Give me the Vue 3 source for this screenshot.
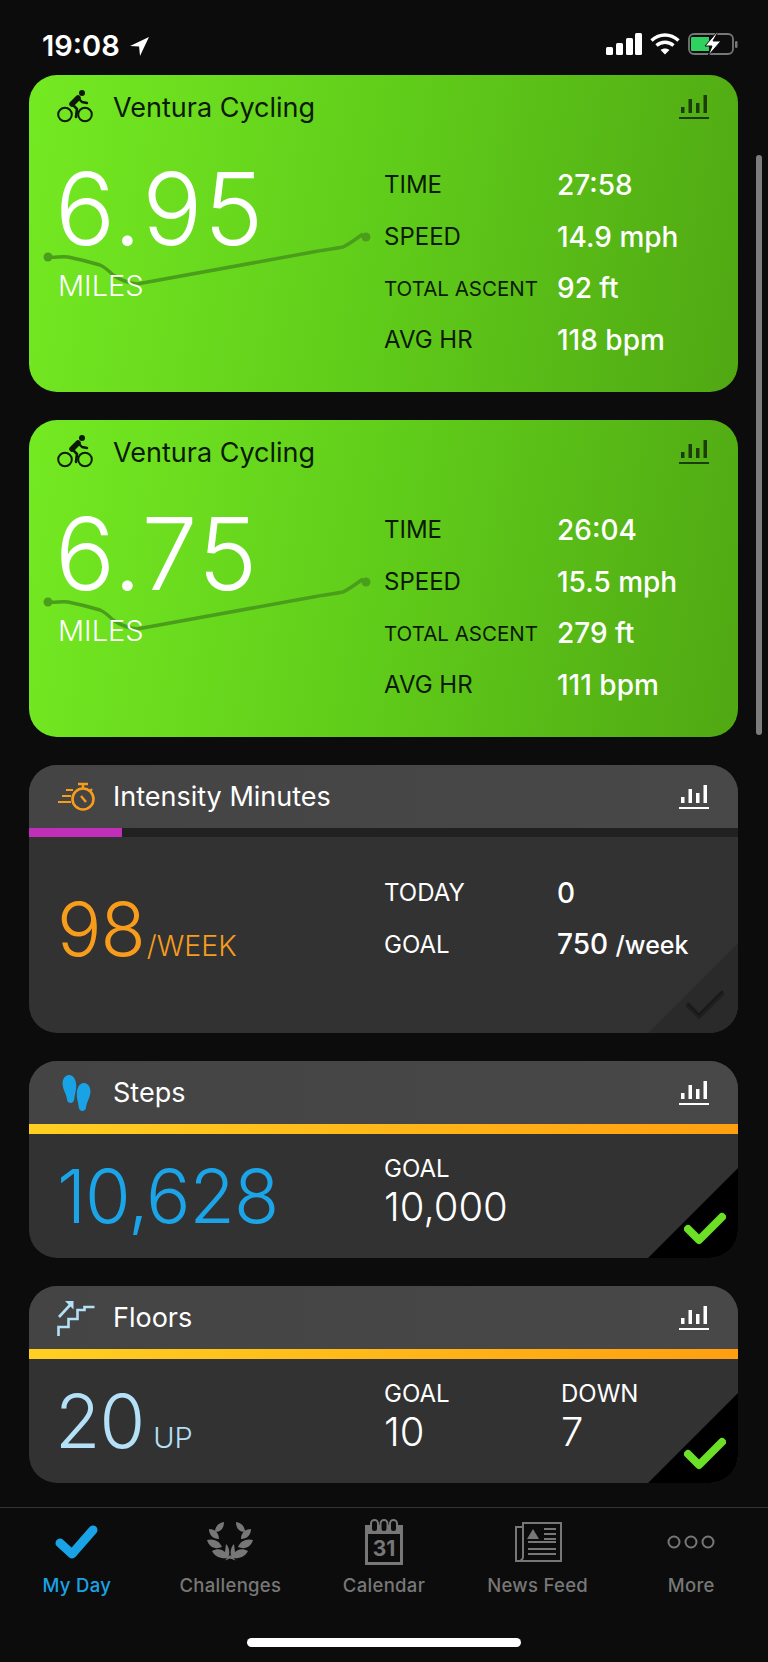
<script setup>
const rides = [
  { miles: '6.95', time: '27:58', speed: '14.9 mph', ascent: '92 ft', hr: '118 bpm' },
  { miles: '6.75', time: '26:04', speed: '15.5 mph', ascent: '279 ft', hr: '111 bpm' }
]
const laurel = 'M17 0C17 6 14 10 8 10 8 5 11 1 17 0zM2 7C8 7 12 11 12 17 6 17 2 13 2 7zM0 18C6 16 13 19 15 25 8 28 2 25 0 18zM5 29C10 26 15 27 18 30L19 22C23 26 23 32 21 36 14 37 8 35 5 29z'
</script>

<template>
  <div class="phone">
    <div class="status">
      <div class="clock">
        <span>19:08</span>
        <svg width="21" height="21" viewBox="0 0 20 20"><path d="M19 1 1 9.500l8.600.6.9 8.900z" fill="#fff" /></svg>
      </div>
      <div class="status-right">
        <svg width="36" height="22" viewBox="0 0 36 22" fill="#fff">
          <rect x="0" y="14" width="7" height="8" rx="1.500" />
          <rect x="10" y="10" width="7" height="12" rx="1.500" />
          <rect x="20" y="5" width="7" height="17" rx="1.500" />
          <rect x="29" y="0" width="7" height="22" rx="1.500" />
        </svg>
        <svg width="30" height="22" viewBox="0 0 30 22" fill="none" stroke="#fff" stroke-width="3.400">
          <path d="M1.500 7.500c8-7.400 19-7.400 27 0" />
          <path d="M6.500 12.500c5-4.400 12-4.400 17 0" />
          <path d="M15 21.500 10.600 17c2.600-2 6.200-2 8.800 0z" fill="#fff" stroke="none" />
        </svg>
        <svg width="50" height="24" viewBox="0 0 50 24">
          <rect x="1" y="2" width="44" height="20" rx="5" fill="none" stroke="#777" stroke-width="1.800" />
          <rect x="47" y="9" width="2.500" height="7" rx="1.200" fill="#777" />
          <path d="M4 5h17v14H4a1 1 0 0 1-1-1V6a1 1 0 0 1 1-1z" fill="#2fd15f" />
          <path d="M29 0 17 14h7l-4 10 13-15h-8l5-9z" fill="#fff" stroke="#0c0c0c" stroke-width="1" />
        </svg>
      </div>
    </div>

    <div class="list">
      <section v-for="ride in rides" :key="ride.miles" class="card green">
        <svg class="spark" width="345" height="70" viewBox="0 0 345 70" fill="none">
          <path d="M19 32c6 1 14-1 20 0 10 2 22 5 32 8 5 2 9 6 13 10 6 4 14 8 24 9l176-32c10-2 20-3 30-5 8-4 14-9 20-13" stroke="#4a9e1c" stroke-width="3.500" stroke-linejoin="round" />
          <circle cx="19" cy="32" r="4.500" fill="#4a9e1c" />
          <circle cx="337" cy="12" r="4.500" fill="#4a9e1c" />
        </svg>
        <header class="green-head">
          <svg class="head-icon" width="38" height="34" viewBox="0 0 38 34" fill="none" stroke="#0b1a05">
            <circle cx="8" cy="24.500" r="6.800" stroke-width="2" />
            <circle cx="28" cy="24.500" r="6.800" stroke-width="2" />
            <circle cx="25" cy="3" r="3" fill="#0b1a05" stroke="none" />
            <path d="M15 14l6-6" stroke-width="5.500" stroke-linecap="round" />
            <path d="M21 8l4 4 5 1" stroke-width="2.400" stroke-linecap="round" stroke-linejoin="round" />
            <path d="M15 14l5 5-1 8" stroke-width="2.600" stroke-linecap="round" stroke-linejoin="round" />
          </svg>
          <h2>Ventura Cycling</h2>
          <svg class="chart" width="30" height="26" viewBox="0 0 30 26" fill="#1b3d0c">
            <rect x="2" y="13" width="3.500" height="6" />
            <rect x="9.500" y="5" width="3.500" height="14" />
            <rect x="17" y="9" width="3.500" height="10" />
            <rect x="24.500" y="1" width="3.500" height="18" />
            <rect x="0" y="23" width="30" height="2" />
          </svg>
        </header>
        <div class="green-body">
          <div class="miles">
            <div class="miles-num">{{ ride.miles }}</div>
            <div class="miles-unit">MILES</div>
          </div>
          <dl class="stats">
            <dt>TIME</dt><dd>{{ ride.time }}</dd>
            <dt>SPEED</dt><dd>{{ ride.speed }}</dd>
            <dt class="small">TOTAL ASCENT</dt><dd>{{ ride.ascent }}</dd>
            <dt>AVG HR</dt><dd>{{ ride.hr }}</dd>
          </dl>
        </div>
      </section>

      <section class="card dark">
        <header class="dark-head">
          <svg class="head-icon" width="38" height="30" viewBox="0 0 38 30" fill="none" stroke="#f89c1c" stroke-width="2">
            <circle cx="26" cy="17" r="10.500" stroke-width="2.600" />
            <path d="M21 2h10M26 2v4M35 7l-2 2" stroke-width="2.400" />
            <path d="M24 14l5 6" stroke-width="2.400" />
            <path d="M9 8h7M5 14h9M1 20h13" />
          </svg>
          <h2>Intensity Minutes</h2>
          <svg class="chart" width="30" height="26" viewBox="0 0 30 26" fill="#fff">
            <rect x="2" y="13" width="3.500" height="6" />
            <rect x="9.500" y="5" width="3.500" height="14" />
            <rect x="17" y="9" width="3.500" height="10" />
            <rect x="24.500" y="1" width="3.500" height="18" />
            <rect x="0" y="23" width="30" height="2" />
          </svg>
        </header>
        <div class="track"><div class="fill-magenta"></div></div>
        <div class="dark-body intensity-body">
          <div class="main-val orange"><span class="num">98</span><span class="unit tight">/WEEK</span></div>
          <dl class="stats two">
            <dt>TODAY</dt><dd>0</dd>
            <dt>GOAL</dt><dd>750 <small>/week</small></dd>
          </dl>
          <div class="corner faint">
            <svg width="42" height="34" viewBox="0 0 42 34" fill="none">
              <path d="M3 17l12 12L39 5" stroke="#1f1f1f" stroke-width="5" />
              <path d="M3 16l12 12L39 4" stroke="#111" stroke-width="1" />
            </svg>
          </div>
        </div>
      </section>

      <section class="card dark">
        <header class="dark-head">
          <svg class="head-icon" width="38" height="38" viewBox="0 0 38 38" fill="#19a3e6">
            <path transform="translate(6 1) rotate(-5 7 14)" d="M7 0C11 0 13.500 4 13.500 10 13.500 16 11 20 10.500 24 10 27 8 28 6.500 28 4 28 3 26 3 23 3 19 0 14 0 9 0 4 3 0 7 0z" />
            <path transform="translate(33 9) scale(-1 1) rotate(-5 7 14)" d="M7 0C11 0 13.500 4 13.500 10 13.500 16 11 20 10.500 24 10 27 8 28 6.500 28 4 28 3 26 3 23 3 19 0 14 0 9 0 4 3 0 7 0z" />
          </svg>
          <h2>Steps</h2>
          <svg class="chart" width="30" height="26" viewBox="0 0 30 26" fill="#fff">
            <rect x="2" y="13" width="3.500" height="6" />
            <rect x="9.500" y="5" width="3.500" height="14" />
            <rect x="17" y="9" width="3.500" height="10" />
            <rect x="24.500" y="1" width="3.500" height="18" />
            <rect x="0" y="23" width="30" height="2" />
          </svg>
        </header>
        <div class="track gold"></div>
        <div class="dark-body goal-body">
          <div class="main-val blue"><span class="num">10,628</span></div>
          <div class="cols">
            <div class="col">
              <div class="col-label">GOAL</div>
              <div class="col-val">10,000</div>
            </div>
          </div>
          <div class="corner">
            <svg width="42" height="34" viewBox="0 0 42 34" fill="none">
              <path d="M4 17l11 11L38 5" stroke="#6ce026" stroke-width="8" stroke-linejoin="round" stroke-linecap="round" />
            </svg>
          </div>
        </div>
      </section>

      <section class="card dark">
        <header class="dark-head">
          <svg class="head-icon" width="38" height="38" viewBox="0 0 38 38" fill="none" stroke="#b4e0f8" stroke-width="2.600">
            <path d="M1.500 37V28h10v-8h9v-9h7V8h10" />
            <path d="M2 18 14 5" />
            <path d="M8 2h8.500v8.500z" fill="#b4e0f8" stroke="none" />
          </svg>
          <h2>Floors</h2>
          <svg class="chart" width="30" height="26" viewBox="0 0 30 26" fill="#fff">
            <rect x="2" y="13" width="3.500" height="6" />
            <rect x="9.500" y="5" width="3.500" height="14" />
            <rect x="17" y="9" width="3.500" height="10" />
            <rect x="24.500" y="1" width="3.500" height="18" />
            <rect x="0" y="23" width="30" height="2" />
          </svg>
        </header>
        <div class="track gold"></div>
        <div class="dark-body goal-body">
          <div class="main-val pale"><span class="num floors-num">20</span><span class="unit">UP</span></div>
          <div class="cols">
            <div class="col">
              <div class="col-label">GOAL</div>
              <div class="col-val">10</div>
            </div>
            <div class="col">
              <div class="col-label">DOWN</div>
              <div class="col-val">7</div>
            </div>
          </div>
          <div class="corner">
            <svg width="42" height="34" viewBox="0 0 42 34" fill="none">
              <path d="M4 17l11 11L38 5" stroke="#6ce026" stroke-width="8" stroke-linejoin="round" stroke-linecap="round" />
            </svg>
          </div>
        </div>
      </section>
    </div>

    <div class="scrollbar"></div>

    <nav class="tabs">
      <div class="tab active">
        <svg width="44" height="36" viewBox="0 0 44 36" fill="none">
          <path d="M5 19l12 11L38 6" stroke="#19a3e6" stroke-width="9" stroke-linejoin="round" stroke-linecap="round" />
        </svg>
        <span>My Day</span>
      </div>
      <div class="tab">
        <svg width="46" height="40" viewBox="0 0 46 40" fill="#777">
          <path d="M23 33l6 5.500-6-2-5 2z" />
          <path :d="laurel" />
          <path :d="laurel" transform="matrix(-1 0 0 1 46 0)" />
        </svg>
        <span>Challenges</span>
      </div>
      <div class="tab">
        <svg width="38" height="46" viewBox="0 0 38 46">
          <rect x="0" y="6" width="38" height="40" fill="#777" />
          <rect x="6" y="1" width="7" height="12" rx="3.500" fill="#0c0c0c" stroke="#777" stroke-width="2" />
          <rect x="15.500" y="1" width="7" height="12" rx="3.500" fill="#0c0c0c" stroke="#777" stroke-width="2" />
          <rect x="25" y="1" width="7" height="12" rx="3.500" fill="#0c0c0c" stroke="#777" stroke-width="2" />
          <rect x="3" y="15" width="32" height="28" fill="#0c0c0c" />
          <text x="19" y="37" text-anchor="middle" class="cal-num">31</text>
        </svg>
        <span>Calendar</span>
      </div>
      <div class="tab">
        <svg width="48" height="42" viewBox="0 0 48 42" fill="none" stroke="#777" stroke-width="2">
          <path d="M9 6H2v34h45V2H9z" />
          <path d="M9 6v30c0 2-2 4-4 4" />
          <path d="M14 21h28M14 28h28M14 33h28" />
          <path d="M30 8h12M30 13h12M30 18h12" />
          <path d="M13 18l6-10 6 10z" fill="#777" stroke="none" />
        </svg>
        <span>News Feed</span>
      </div>
      <div class="tab">
        <svg width="48" height="16" viewBox="0 0 48 16" fill="none" stroke="#777" stroke-width="2">
          <circle cx="7" cy="8" r="5.500" />
          <circle cx="24" cy="8" r="5.500" />
          <circle cx="41" cy="8" r="5.500" />
        </svg>
        <span>More</span>
      </div>
    </nav>
    <div class="home-bar"></div>
  </div>
</template>

<style scoped>
.phone {
  position: relative;
  width: 768px;
  height: 1662px;
  background: #0c0c0c;
  color: #fff;
  font-family: Inter, "Liberation Sans", sans-serif;
  overflow: hidden;
}
.status {
  height: 75px;
  display: flex;
  justify-content: space-between;
  align-items: flex-start;
  padding: 32px 30px 0 42px;
  box-sizing: border-box;
}
.clock {
  display: flex;
  align-items: center;
  gap: 9px;
  font-size: 29px;
  font-weight: 600;
  line-height: 28px;
}
.status-right {
  display: flex;
  align-items: center;
  gap: 8px;
}
.list {
  display: flex;
  flex-direction: column;
  gap: 28px;
  padding: 0 30px 0 29px;
}
.card {
  position: relative;
  border-radius: 28px;
  overflow: hidden;
}
.green {
  height: 317px;
  background: linear-gradient(100deg, #74ea22 0%, #60cc1a 50%, #50a813 100%);
}
.spark {
  position: absolute;
  left: 0;
  top: 150px;
}
.green-head,
.dark-head {
  display: flex;
  align-items: center;
  padding: 0 29px 0 28px;
}
.green-head {
  position: relative;
  height: 64px;
  color: #0b1a05;
}
.dark-head {
  height: 63px;
  background: linear-gradient(90deg, #444, #484848);
}
.head-icon {
  flex: none;
  width: 38px;
  margin-right: 18px;
}
h2 {
  flex: 1;
  margin: 0;
  font-size: 27px;
  font-weight: 400;
}
.green-body {
  position: relative;
  display: flex;
  padding: 14px 0 0 29px;
}
.green-body .stats {
  padding-top: 6px;
}
.miles {
  width: 326px;
}
.miles-num {
  margin-left: -3px;
  font-size: 100px;
  font-weight: 300;
  line-height: 112px;
  letter-spacing: 1.500px;
}
.miles-unit {
  margin-top: 4px;
  font-size: 29px;
  font-weight: 300;
  line-height: 34px;
}
.stats {
  display: grid;
  grid-template-columns: 173px auto;
  grid-auto-rows: 51.7px;
  align-items: center;
  margin: 0;
}
dt {
  font-size: 24px;
  font-weight: 400;
  color: #0b1a05;
}
dt.small {
  font-size: 20.500px;
}
dd {
  margin: 0;
  font-size: 28px;
  font-weight: 500;
  color: #fff;
}
dd small {
  font-size: 25px;
}
.dark {
  background: #323232;
}
.track {
  height: 9px;
  background: #212121;
}
.fill-magenta {
  width: 93px;
  height: 100%;
  background: #c12eb8;
}
.gold {
  height: 10px;
  background: linear-gradient(90deg, #ffd021, #ff9f10);
}
.dark-body {
  position: relative;
  display: flex;
  align-items: center;
  padding-left: 28px;
}
.intensity-body {
  height: 196px;
}
.goal-body {
  height: 124px;
}
.main-val {
  width: 327px;
  display: flex;
  align-items: baseline;
}
.intensity-body .main-val {
  margin-top: -12px;
}
.num {
  font-size: 74px;
  font-weight: 300;
  line-height: 84px;
  letter-spacing: -1px;
}
.floors-num {
  margin-left: -2px;
}
.unit {
  margin-left: 9px;
  font-size: 29px;
  font-weight: 300;
}
.unit.tight {
  margin-left: 2px;
  font-size: 28.500px;
}
.orange {
  color: #f89c1c;
}
.blue {
  color: #1ba5e8;
}
.pale {
  color: #b4e0f8;
}
dl.two {
  margin-top: -33px;
}
dl.two dt {
  color: #fff;
}
.cols {
  display: flex;
  margin-top: -8px;
}
.col {
  width: 177px;
}
.col-label {
  font-size: 24px;
  line-height: 30px;
}
.col-val {
  font-size: 40px;
  font-weight: 300;
  line-height: 46px;
}
.corner {
  position: absolute;
  right: 0;
  bottom: 0;
  width: 90px;
  height: 90px;
  background: #000;
  clip-path: polygon(100% 0, 100% 100%, 0 100%);
}
.corner.faint {
  background: #2a2a2a;
}
.corner svg {
  position: absolute;
  left: 36px;
  top: 44px;
}
.scrollbar {
  position: absolute;
  left: 756px;
  top: 155px;
  width: 6px;
  height: 580px;
  border-radius: 3px;
  background: #7c7c7c;
}
.tabs {
  position: absolute;
  left: 0;
  right: 0;
  top: 1507px;
  height: 155px;
  box-sizing: border-box;
  border-top: 1px solid #333;
  display: grid;
  grid-template-columns: repeat(5, 1fr);
}
.tab {
  position: relative;
  height: 92px;
  display: flex;
  flex-direction: column;
  align-items: center;
  color: #777;
}
.tab svg {
  position: absolute;
  left: 50%;
  top: 34px;
  transform: translate(-50%, -50%);
}
.tab span {
  position: absolute;
  top: 64px;
  font-size: 18.500px;
  font-weight: 500;
  line-height: 26px;
  letter-spacing: 0.3px;
  white-space: nowrap;
}
.tab.active {
  color: #19a3e6;
}
.cal-num {
  font-family: Inter, sans-serif;
  font-size: 21px;
  font-weight: 700;
  fill: #777;
}
.home-bar {
  position: absolute;
  left: 247px;
  top: 1638px;
  width: 274px;
  height: 9px;
  border-radius: 5px;
  background: #fff;
}
</style>
